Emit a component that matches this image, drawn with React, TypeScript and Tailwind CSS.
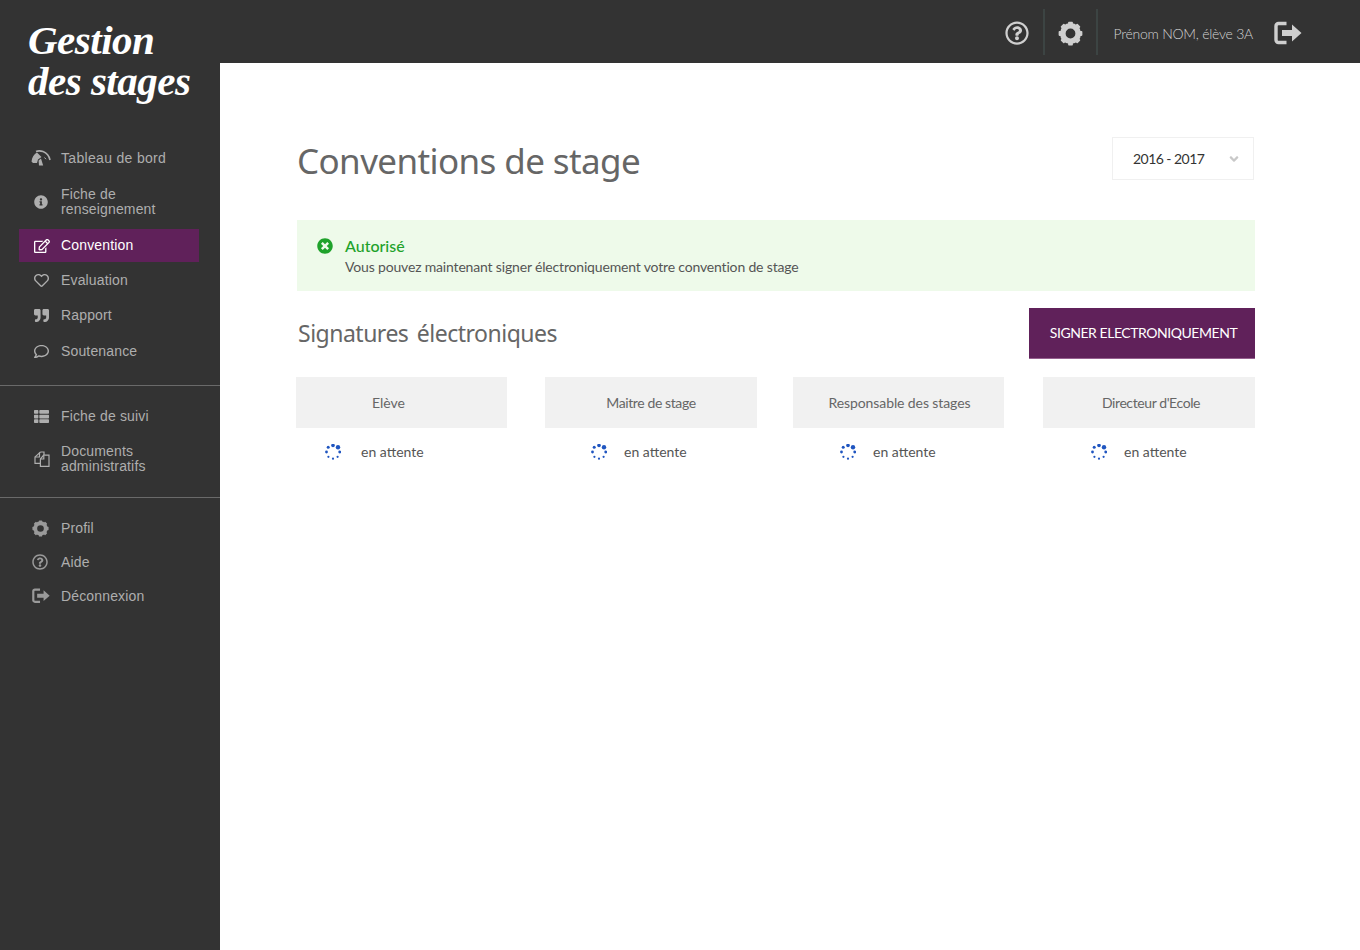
import { ReactNode } from "react";
import {
  FaAngleDown,
  FaInfoCircle,
  FaQuoteRight,
  FaRegComment,
  FaRegEdit,
  FaRegHeart,
  FaRegQuestionCircle,
  FaThList,
  FaTimesCircle,
} from "react-icons/fa";

function Spinner() {
  const dots = [
    [8, 1.5, 1.8],
    [13, 3.2, 2.2],
    [14.7, 8, 1.4],
    [12.6, 12.8, 1.1],
    [8, 14.7, 1.1],
    [3.4, 12.8, 1.1],
    [1.5, 8, 1.4],
    [3.2, 3.2, 1.5],
  ];
  return (
    <svg width="16" height="16" viewBox="0 0 16 16" className="shrink-0">
      {dots.map(([cx, cy, r]) => (
        <circle key={`${cx}-${cy}`} cx={cx} cy={cy} r={r} fill="#1f55c0" />
      ))}
    </svg>
  );
}

function GearIcon({ size, className }: { size: number; className?: string }) {
  return (
    <svg width={size} height={size} viewBox="0 0 24 24" className={className}>
      <circle cx="12" cy="12" r="7.4" fill="none" stroke="currentColor" strokeWidth="5.4" />
      {[0, 45, 90, 135, 180, 225, 270, 315].map((a) => (
        <rect key={a} x="9.7" y="0.6" width="4.6" height="4.4" rx="0.8" fill="currentColor" transform={`rotate(${a} 12 12)`} />
      ))}
    </svg>
  );
}

function LogoutIcon({ size, className }: { size: number; className?: string }) {
  return (
    <svg width={size} height={(size * 24) / 28} viewBox="0 0 28 24" className={className}>
      <path d="M12.5 2.5H4.5a2.5 2.5 0 0 0-2.5 2.5v14a2.5 2.5 0 0 0 2.5 2.5h8" fill="none" stroke="currentColor" strokeWidth="3.4" />
      <path d="M8 9h10V3.6L27.5 12 18 20.4V15H8z" fill="currentColor" />
    </svg>
  );
}

function GaugeIcon({ className }: { className?: string }) {
  return (
    <svg width="20" height="16" viewBox="0 0 20 16" className={className}>
      <path d="M0.5 11.5C1 7 3 4 6 2.4L10.5 7 7 9.5 6 13H2z" fill="currentColor" />
      <path d="M5 1.6C7 0.7 9.6 0.7 12 1.6c3.6 1.4 6.2 4.6 7 8.4" fill="none" stroke="currentColor" strokeWidth="1.6" />
      <path d="M8 15.5 7.6 10.5 10 8.6 12.2 15.5z" fill="currentColor" />
      <path d="M13.5 7.5 15 9.2" stroke="currentColor" strokeWidth="1" />
    </svg>
  );
}

function FilesIcon({ className }: { className?: string }) {
  return (
    <svg width="16" height="16" viewBox="0 0 16 16" className={className}>
      <path d="M6.5 1 2.8 4.4 1 6v6.4h5" fill="none" stroke="currentColor" strokeWidth="1.2" />
      <path d="M6.5 1H10v3M1 6h4.5V1.4" fill="none" stroke="currentColor" strokeWidth="1.2" />
      <path d="M9.6 4.2H15v11.2H6.4V8z" fill="none" stroke="currentColor" strokeWidth="1.2" />
      <path d="M9.8 4.4V8H6.4" fill="none" stroke="currentColor" strokeWidth="1.2" />
    </svg>
  );
}

function NavItem({
  icon,
  label,
  className,
  active,
}: {
  icon: ReactNode;
  label: ReactNode;
  className: string;
  active?: boolean;
}) {
  return (
    <a
      className={`flex items-center ml-[19px] mr-[21px] pl-[15px] ${className} ${
        active ? "bg-[#60215a] text-white" : "text-[#aeaeae]"
      }`}
    >
      <span className="w-[27px] flex items-center shrink-0">{icon}</span>
      <span className="text-[14px] leading-[15px] tracking-[0.15px]">{label}</span>
    </a>
  );
}

const signatures = [
  { name: "Elève", card: "w-[211px]", label: "pr-[26px]", row: "pl-[29px] gap-[20px]" },
  { name: "Maitre de stage", card: "w-[212px] ml-[38px]", label: "tracking-[-0.4px]", row: "pl-[46px] gap-[17px]" },
  { name: "Responsable des stages", card: "w-[211px] ml-[36px]", label: "pl-[2px] tracking-[-0.1px]", row: "pl-[47px] gap-[17px]" },
  { name: "Directeur d'Ecole", card: "w-[212px] ml-[39px]", label: "pl-[4px] tracking-[-0.4px]", row: "pl-[48px] gap-[17px]" },
];

function App() {
  return (
    <div className="flex min-h-[950px] bg-white font-['Lato',sans-serif]">
      <aside className="w-[220px] shrink-0 bg-[#333333] font-['Liberation_Sans',sans-serif]">
        <div className="pl-[28px] pt-[20px] h-[137px] font-['Liberation_Serif',serif] font-bold italic text-white text-[41px] leading-[41px] tracking-[-0.5px]">
          Gestion
          <br />
          des stages
        </div>
        <nav className="flex flex-col">
          <NavItem icon={<GaugeIcon className="-ml-[3px]" />} label={<span className="tracking-[0.32px]">Tableau de bord</span>} className="h-[42px]" />
          <NavItem icon={<FaInfoCircle size={14} />} label={<>Fiche de<br />renseignement</>} className="h-[50px] pb-[4px]" />
          <NavItem active icon={<FaRegEdit size={16} />} label="Convention" className="h-[33px]" />
          <NavItem icon={<FaRegHeart size={15} />} label="Evaluation" className="h-[36px]" />
          <NavItem icon={<FaQuoteRight size={15} />} label="Rapport" className="h-[35px]" />
          <NavItem icon={<FaRegComment size={15} />} label="Soutenance" className="h-[36px]" />
        </nav>
        <div className="mt-[16px] border-t border-[#6a6a6a]" />
        <nav className="flex flex-col pt-[13px] pb-[12px]">
          <NavItem icon={<FaThList size={15} />} label="Fiche de suivi" className="h-[34px]" />
          <NavItem icon={<FilesIcon />} label={<>Documents<br />administratifs</>} className="h-[52px]" />
        </nav>
        <div className="border-t border-[#6a6a6a]" />
        <nav className="flex flex-col pt-[13px]">
          <NavItem icon={<GearIcon size={17} className="-ml-[2px] text-[#9a9a9a]" />} label="Profil" className="h-[34px]" />
          <NavItem icon={<FaRegQuestionCircle size={16} className="-ml-[2px] text-[#9a9a9a]" />} label="Aide" className="h-[34px]" />
          <NavItem icon={<LogoutIcon size={18} className="-ml-[2px] text-[#9a9a9a]" />} label="Déconnexion" className="h-[34px]" />
        </nav>
      </aside>

      <div className="flex-1 flex flex-col min-w-0">
        <header className="h-[63px] bg-[#333333] flex items-center justify-end pt-[3px] pr-[58px] text-[#cfcfcf]">
          <FaRegQuestionCircle size={24} className="mr-[14px]" />
          <div className="w-[2px] h-[46px] bg-[#3c4443] -mt-[3px]" />
          <GearIcon size={25} className="mx-[13px]" />
          <div className="w-[2px] h-[46px] bg-[#3c4443] -mt-[3px]" />
          <span className="ml-[16px] mr-[21px] text-[14px] tracking-[-0.25px] font-light text-[#d2d2d2]">Prénom NOM, élève 3A</span>
          <LogoutIcon size={28} />
        </header>

        <main className="pl-[76px] w-[1035px]">
          <div className="flex items-start justify-between pt-[74px] pr-[1px] h-[157px]">
            <h1 className="font-['Noto_Sans',sans-serif] text-[35px] leading-[48px] text-[#666666] pl-[1px] tracking-[-0.6px]">
              Conventions de stage
            </h1>
            <div className="w-[142px] h-[43px] border border-[#f0f0f0] flex items-center pl-[20px] pr-[12px] justify-between text-[14px] tracking-[-0.55px] text-[#333333]">
              <span>2016 - 2017</span>
              <FaAngleDown size={14} className="text-[#c8c8c8]" />
            </div>
          </div>

          <div className="h-[71px] ml-[1px] bg-[#eefaea] flex pl-[20px] pt-[17px]">
            <FaTimesCircle size={16} className="text-[#1fa22b] mt-[1px]" />
            <div className="ml-[12px]">
              <div className="text-[16px] leading-[18px] font-medium text-[#1fa22b]">Autorisé</div>
              <div className="text-[14px] leading-[20px] tracking-[-0.17px] text-[#555555] mt-[2px]">
                Vous pouvez maintenant signer électroniquement votre convention de stage
              </div>
            </div>
          </div>

          <div className="flex items-center justify-between mt-[17px] h-[51px]">
            <h2 className="font-['Noto_Sans',sans-serif] text-[23px] text-[#666666] pl-[2px] tracking-[-0.5px] [word-spacing:3px]">
              Signatures électroniques
            </h2>
            <button className="w-[226px] h-[51px] pb-[2px] pl-[3px] bg-[#60215a] border-b border-[#96608f] text-white text-[14px] tracking-[-0.45px]">
              SIGNER ELECTRONIQUEMENT
            </button>
          </div>

          <div className="flex mt-[18px]">
            {signatures.map((s) => (
              <div key={s.name} className={s.card}>
                <div className={`h-[51px] bg-[#f1f1f1] flex items-center justify-center text-[14px] text-[#666666] ${s.label}`}>
                  {s.name}
                </div>
                <div className={`flex items-center h-[47px] text-[14px] text-[#555555] ${s.row}`}>
                  <Spinner />
                  <span>en attente</span>
                </div>
              </div>
            ))}
          </div>
        </main>
      </div>
    </div>
  );
}

export default App;
